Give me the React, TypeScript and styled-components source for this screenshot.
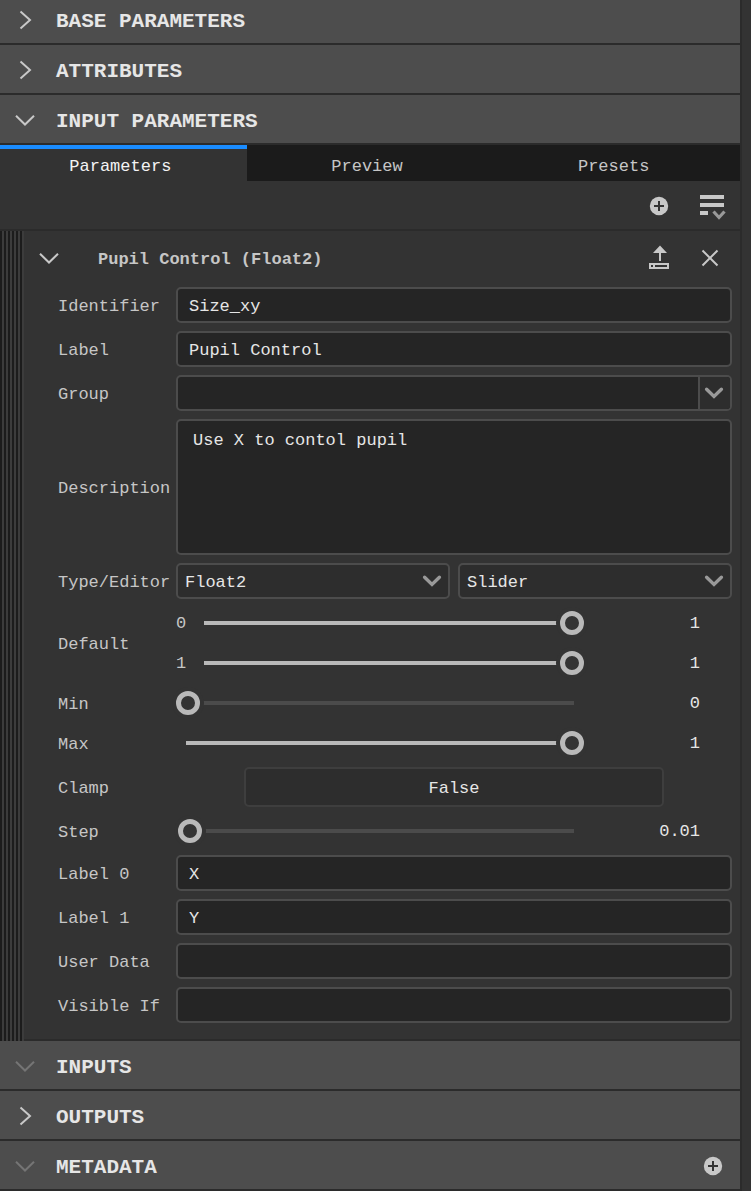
import React, { useId, useState } from "react";
import styled, { createGlobalStyle } from "styled-components";

const color = {
  panel: "#333333",
  header: "#4d4d4d",
  divider: "#2b2b2b",
  tab: "#1b1b1b",
  field: "#252525",
  control: "#2d2d2d",
  border: "#4c4c4c",
  softBorder: "#3e3e3e",
  label: "#c6c6c6",
  text: "#e6e6e6",
  icon: "#c8c8c8",
  caret: "#999999",
  faint: "#757575",
  fill: "#b9b9b9",
  track: "#4b4b4b",
  accent: "#1a8cff",
};

const GlobalStyle = createGlobalStyle`
  *, *::before, *::after { box-sizing: border-box; }
  body {
    margin: 0;
    background: ${color.panel};
    color: ${color.text};
    font-family: "Liberation Mono", monospace;
    font-size: 17px;
    line-height: 20px;
    overflow-x: hidden;
  }
  button, input, select, textarea { font: inherit; color: inherit; margin: 0; }
`;

const Panel = styled.main`
  margin: -5px 9px 0 0;
  border-right: 2px solid ${color.divider};
`;

const SectionBar = styled.div`
  display: flex;
  align-items: center;
  height: 50px;
  padding: 2px 17px 0 0;
  background: ${color.header};
  border-bottom: 2px solid ${color.divider};
`;

const SectionToggle = styled.button`
  flex: 1;
  display: flex;
  align-items: center;
  gap: 19px;
  height: 46px;
  padding: 0 0 0 13px;
  border: 0;
  background: none;
  color: ${color.text};
  font-size: 21px;
  font-weight: 700;
  line-height: 24px;
  text-align: left;
`;

const SectionTitle = styled.span`
  padding-top: 4px;
`;

const IconButton = styled.button`
  display: grid;
  place-items: center;
  padding: 0;
  border: 0;
  background: none;
  color: ${color.icon};
`;

const Tabs = styled.div`
  display: grid;
  grid-template-columns: repeat(3, 1fr);
`;

const Tab = styled.button<{ $active: boolean }>`
  height: 36px;
  padding: 4px 6px 0 0;
  border: 0;
  border-top: 4px solid ${(p) => (p.$active ? color.accent : color.tab)};
  background: ${(p) => (p.$active ? color.panel : color.tab)};
  color: ${(p) => (p.$active ? "#f4f4f4" : color.label)};
`;

const Toolbar = styled.div`
  display: flex;
  justify-content: flex-end;
  align-items: center;
  gap: 30px;
  height: 50px;
  padding: 2px 13px 0 0;
  border-bottom: 2px solid ${color.divider};
`;

const Item = styled.section`
  display: flex;
`;

const Grip = styled.div`
  flex: 0 0 24px;
  background: repeating-linear-gradient(90deg, #1c1c1c 0 2px, #3c3c3c 2px 4px);
`;

const ItemBody = styled.div`
  flex: 1;
  min-width: 0;
  padding: 0 8px 12px 34px;
  border-bottom: 2px solid ${color.divider};
`;

const ItemHeader = styled.header`
  display: flex;
  align-items: center;
  gap: 30px;
  height: 52px;
  margin-left: -21px;
  padding: 2px 12px 0 0;
`;

const ItemTitle = styled.h2`
  flex: 1;
  margin: 0;
  padding: 4px 0 0 7px;
  color: ${color.label};
  font-size: 17px;
  font-weight: 700;
`;

const Row = styled.div`
  display: grid;
  grid-template-columns: 118px minmax(0, 1fr);
  align-items: center;
  padding: 4px 0;
`;

const SliderRow = styled(Row)`
  padding: 0;
`;

const RowLabel = styled.label`
  padding-top: 4px;
  color: ${color.label};
`;

const TextField = styled.input`
  width: 100%;
  height: 36px;
  padding: 2px 11px 0;
  border: 2px solid ${color.border};
  border-radius: 5px;
  background: ${color.field};
  outline: 0;
`;

const TextArea = styled.textarea`
  display: block;
  width: 100%;
  height: 136px;
  padding: 10px 15px;
  border: 2px solid ${color.border};
  border-radius: 5px;
  background: ${color.field};
  outline: 0;
  resize: none;
`;

const Combo = styled.div`
  display: flex;
  height: 36px;
  border: 2px solid ${color.border};
  border-radius: 5px;
  background: ${color.field};
  overflow: hidden;
`;

const ComboInput = styled.input`
  flex: 1;
  min-width: 0;
  padding: 2px 11px 0;
  border: 0;
  background: none;
  outline: 0;
`;

const ComboButton = styled(IconButton)`
  width: 32px;
  padding-right: 2px;
  border-left: 2px solid ${color.border};
  background: ${color.control};
  color: ${color.caret};
`;

const SelectPair = styled.div`
  display: grid;
  grid-template-columns: 1fr 1fr;
  gap: 8px;
`;

const SelectBox = styled.div`
  display: grid;
  grid-template-columns: minmax(0, 1fr) 36px;
  align-items: center;
  color: ${color.caret};

  & > select,
  & > svg { grid-row: 1; }
  & > svg { grid-column: 2; justify-self: center; pointer-events: none; }
`;

const Select = styled.select`
  grid-column: 1 / -1;
  height: 36px;
  padding: 3px 34px 0 7px;
  border: 2px solid ${color.border};
  border-radius: 5px;
  background: ${color.control};
  color: ${color.text};
  appearance: none;
  outline: 0;
`;

const SliderLine = styled.div`
  display: grid;
  grid-template-columns: minmax(0, 408fr) minmax(0, 148fr);
  align-items: center;
  height: 40px;
`;

const SliderTrack = styled.div`
  display: flex;
  align-items: center;
`;

const ChannelLabel = styled.label`
  width: 18px;
  padding-top: 2px;
  color: ${color.label};
`;

const Range = styled.input<{ $full: boolean }>`
  flex: 1;
  min-width: 0;
  height: 24px;
  appearance: none;
  outline: 0;
  background: linear-gradient(${(p) => (p.$full ? color.fill : color.track)} 0 0)
    center / calc(100% - 20px) 4px no-repeat;

  &::-webkit-slider-thumb {
    appearance: none;
    width: 24px;
    height: 24px;
    border: 5px solid ${color.fill};
    border-radius: 50%;
    background: ${color.panel};
    box-shadow: 0 0 0 4px ${color.panel};
  }
`;

const SliderValue = styled.output`
  padding: 2px 32px 0 0;
  text-align: right;
`;

const ClampLine = styled.div`
  display: flex;
  padding: 0 68px;
`;

const ToggleButton = styled.button`
  flex: 1;
  height: 40px;
  padding: 4px 0 0;
  border: 2px solid ${color.softBorder};
  border-radius: 5px;
  background: ${color.control};
`;

function Chevron({ open = false, faint = false }: { open?: boolean; faint?: boolean }) {
  return (
    <svg width="24" height="24" viewBox="0 0 24 24" fill="none" stroke={faint ? color.faint : color.icon} strokeWidth="2">
      <path d={open ? "M3 7.7L12 16.5L21 7.7" : "M7.5 3.5L17 12L7.5 20.5"} />
    </svg>
  );
}

function Caret() {
  return (
    <svg width="20" height="14" viewBox="0 0 20 14" fill="none" stroke="currentColor" strokeWidth="3.4" strokeLinecap="round">
      <path d="M2.6 3.2L10 10.4L17.4 3.2" />
    </svg>
  );
}

function PlusIcon() {
  return (
    <svg width="20" height="20" viewBox="0 0 20 20">
      <circle cx="10" cy="10" r="9.2" fill={color.icon} />
      <path d="M10 5V15M5 10H15" stroke={color.panel} strokeWidth="2" />
    </svg>
  );
}

function ListIcon() {
  return (
    <svg width="28" height="28" viewBox="0 0 28 28" fill="none">
      <path d="M1 5H25M1 13H25M1 21H9" stroke={color.icon} strokeWidth="4" />
      <path d="M14.5 19.5L20 25.5L25.5 19.5" stroke={color.caret} strokeWidth="3.2" />
    </svg>
  );
}

function ExportIcon() {
  return (
    <svg width="22" height="26" viewBox="0 0 22 26" fill={color.icon}>
      <path d="M12 0.5L19 8H5ZM11 7H13V16H11Z" />
      <path fillRule="evenodd" d="M1 18H21V24H1ZM3 20V22H5V20ZM7 20V22H19V20Z" />
    </svg>
  );
}

function CloseIcon() {
  return (
    <svg width="20" height="20" viewBox="0 0 20 20" stroke={color.icon} strokeWidth="2">
      <path d="M2.5 2.5L17.5 17.5M17.5 2.5L2.5 17.5" />
    </svg>
  );
}

function Section({ title, open, faint, action }: { title: string; open?: boolean; faint?: boolean; action?: React.ReactNode }) {
  return (
    <SectionBar>
      <SectionToggle type="button" aria-expanded={!!open}>
        <Chevron open={open} faint={faint} />
        <SectionTitle>{title}</SectionTitle>
      </SectionToggle>
      {action}
    </SectionBar>
  );
}

function TextRow({ label, value = "" }: { label: string; value?: string }) {
  const id = useId();
  return (
    <Row>
      <RowLabel htmlFor={id}>{label}</RowLabel>
      <TextField id={id} type="text" defaultValue={value} />
    </Row>
  );
}

function Slider({ id, initial, max = 1, channel }: { id: string; initial: number; max?: number; channel?: string }) {
  const [value, setValue] = useState(initial);
  return (
    <SliderLine>
      <SliderTrack>
        {channel && <ChannelLabel htmlFor={id}>{channel}</ChannelLabel>}
        <Range
          id={id}
          type="range"
          min={0}
          max={max}
          step={0.01}
          value={value}
          $full={value >= max}
          onChange={(e) => setValue(Number(e.target.value))}
        />
      </SliderTrack>
      <SliderValue htmlFor={id}>{value}</SliderValue>
    </SliderLine>
  );
}

function SingleSliderRow({ label, initial, max }: { label: string; initial: number; max?: number }) {
  const id = useId();
  return (
    <SliderRow>
      <RowLabel htmlFor={id}>{label}</RowLabel>
      <Slider id={id} initial={initial} max={max} />
    </SliderRow>
  );
}

export default function App() {
  const [tab, setTab] = useState("Parameters");
  const [clamp, setClamp] = useState(false);

  return (
    <>
      <GlobalStyle />
      <Panel>
        <Section title="BASE PARAMETERS" />
        <Section title="ATTRIBUTES" />
        <Section title="INPUT PARAMETERS" open />
        <Tabs role="tablist">
          {["Parameters", "Preview", "Presets"].map((name) => (
            <Tab key={name} type="button" role="tab" aria-selected={tab === name} $active={tab === name} onClick={() => setTab(name)}>
              {name}
            </Tab>
          ))}
        </Tabs>
        <Toolbar>
          <IconButton type="button" aria-label="Add parameter"><PlusIcon /></IconButton>
          <IconButton type="button" aria-label="List options"><ListIcon /></IconButton>
        </Toolbar>
        <Item>
          <Grip />
          <ItemBody>
            <ItemHeader>
              <IconButton type="button" aria-label="Collapse"><Chevron open /></IconButton>
              <ItemTitle>Pupil Control (Float2)</ItemTitle>
              <IconButton type="button" aria-label="Export"><ExportIcon /></IconButton>
              <IconButton type="button" aria-label="Remove"><CloseIcon /></IconButton>
            </ItemHeader>
            <TextRow label="Identifier" value="Size_xy" />
            <TextRow label="Label" value="Pupil Control" />
            <Row>
              <RowLabel htmlFor="group">Group</RowLabel>
              <Combo>
                <ComboInput id="group" type="text" />
                <ComboButton type="button" aria-label="Show groups"><Caret /></ComboButton>
              </Combo>
            </Row>
            <Row>
              <RowLabel htmlFor="description">Description</RowLabel>
              <TextArea id="description" defaultValue="Use X to contol pupil" />
            </Row>
            <Row>
              <RowLabel htmlFor="type">Type/Editor</RowLabel>
              <SelectPair>
                <SelectBox>
                  <Select id="type"><option>Float2</option></Select>
                  <Caret />
                </SelectBox>
                <SelectBox>
                  <Select aria-label="Editor"><option>Slider</option></Select>
                  <Caret />
                </SelectBox>
              </SelectPair>
            </Row>
            <SliderRow>
              <RowLabel htmlFor="default-0">Default</RowLabel>
              <div>
                <Slider id="default-0" channel="0" initial={1} />
                <Slider id="default-1" channel="1" initial={1} />
              </div>
            </SliderRow>
            <SingleSliderRow label="Min" initial={0} />
            <SingleSliderRow label="Max" initial={1} />
            <Row>
              <RowLabel htmlFor="clamp">Clamp</RowLabel>
              <ClampLine>
                <ToggleButton id="clamp" type="button" aria-pressed={clamp} onClick={() => setClamp(!clamp)}>
                  {clamp ? "True" : "False"}
                </ToggleButton>
              </ClampLine>
            </Row>
            <SingleSliderRow label="Step" initial={0.01} max={2} />
            <TextRow label="Label 0" value="X" />
            <TextRow label="Label 1" value="Y" />
            <TextRow label="User Data" />
            <TextRow label="Visible If" />
          </ItemBody>
        </Item>
        <Section title="INPUTS" open faint />
        <Section title="OUTPUTS" />
        <Section
          title="METADATA"
          open
          faint
          action={<IconButton type="button" aria-label="Add metadata"><PlusIcon /></IconButton>}
        />
      </Panel>
    </>
  );
}
